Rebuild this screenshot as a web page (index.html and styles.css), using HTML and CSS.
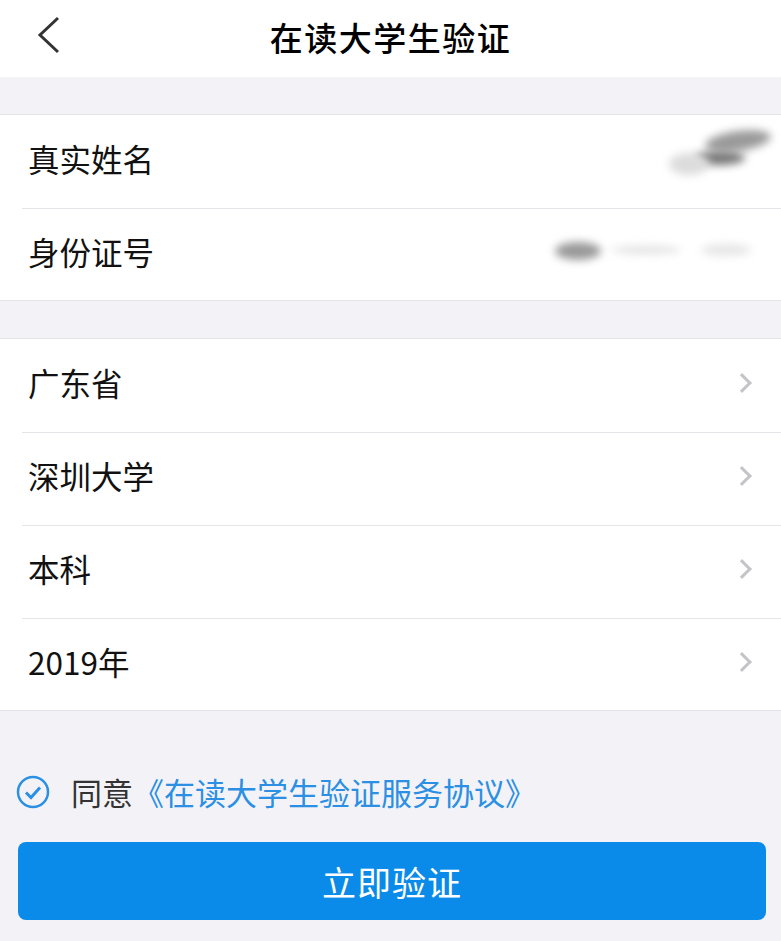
FILE: index.html
```html
<!DOCTYPE html>
<html lang="zh-CN">
<head>
  <meta charset="utf-8">
  <title>在读大学生验证</title>
  <link rel="stylesheet" href="styles.css">
</head>
<body>

  <header class="nav">
    <span class="back">
      <svg width="26" height="38" viewBox="0 0 26 38"><path d="M22 2 L4 19 L22 36" fill="none" stroke="#333" stroke-width="3"/></svg>
    </span>
    <h1 class="nav-title">在读大学生验证</h1>
  </header>

  <div class="group">
    <div class="row">
      <span class="label">真实姓名</span>
      <span class="value name-value">
        <i class="smudge s1"></i>
        <i class="smudge s2"></i>
        <i class="smudge s3"></i>
      </span>
    </div>
    <div class="row">
      <span class="label">身份证号</span>
      <span class="value id-value">
        <i class="smudge s4"></i>
        <i class="smudge s5"></i>
        <i class="smudge s6"></i>
      </span>
    </div>
  </div>

  <div class="group">
    <div class="row link-row">
      <span class="label">广东省</span>
      <span class="arrow"></span>
    </div>
    <div class="row link-row">
      <span class="label">深圳大学</span>
      <span class="arrow"></span>
    </div>
    <div class="row link-row">
      <span class="label">本科</span>
      <span class="arrow"></span>
    </div>
    <div class="row link-row">
      <span class="label">2019年</span>
      <span class="arrow"></span>
    </div>
  </div>

  <div class="agree">
    <svg class="check" width="34" height="34" viewBox="0 0 34 34">
      <circle cx="17" cy="17" r="15" fill="none" stroke="#2b8fe3" stroke-width="2.5"/>
      <path d="M10 17.5 L15 22.5 L24 12.5" fill="none" stroke="#2b8fe3" stroke-width="3"/>
    </svg>
    <span class="agree-text">同意</span>
    <a class="agree-link">《在读大学生验证服务协议》</a>
  </div>

  <button class="submit">立即验证</button>

</body>
</html>
```

FILE: styles.css
```css
body {
  margin: 0;
  background: #f3f3f7;
  font-family: "Noto Sans CJK SC", "Liberation Sans", sans-serif;
  color: #111;
}

.nav {
  height: 77px;
  background: #fff;
  display: flex;
  align-items: center;
  justify-content: center;
  position: relative;
}

.back {
  position: absolute;
  left: 36px;
  top: 16px;
}

.nav-title {
  margin: 0 0 4px 0;
  font-size: 33px;
  font-weight: 500;
  color: #000;
  letter-spacing: 1.5px;
}

.group {
  margin-top: 37px;
  background: #fff;
  border-top: 1px solid #e4e4e8;
  border-bottom: 1px solid #e4e4e8;
}

.row {
  height: 92px;
  display: flex;
  align-items: center;
  padding-left: 28px;
  padding-right: 28px;
  position: relative;
}

.row + .row::before {
  content: "";
  position: absolute;
  left: 22px;
  right: 0;
  top: 0;
  border-top: 1px solid #e4e4e8;
}

.row + .row {
  border-top: 1px solid transparent;
}

.label {
  font-size: 31.5px;
  line-height: 1;
  color: #111;
  margin-top: -5px;
}

.value {
  margin-left: auto;
  position: relative;
  height: 60px;
}

.name-value {
  width: 110px;
  margin-right: -22px;
}

.id-value {
  width: 220px;
  margin-right: -18px;
}

.smudge {
  position: absolute;
  display: block;
  border-radius: 50%;
  filter: blur(4px);
}

.s1 { left: 40px; top: 0; width: 66px; height: 20px; background: #9a9a9a; transform: rotate(-8deg); }
.s2 { left: 30px; top: 20px; width: 50px; height: 14px; background: #777; }
.s3 { left: 4px; top: 22px; width: 40px; height: 22px; background: #dcdcdc; }
.s4 { left: 4px; top: 18px; width: 46px; height: 18px; background: #999; }
.s5 { left: 60px; top: 22px; width: 70px; height: 8px; background: #e2e2e2; }
.s6 { left: 150px; top: 20px; width: 50px; height: 12px; background: #e6e6e6; }

.arrow {
  margin-left: auto;
  width: 11px;
  height: 11px;
  border-top: 3px solid #c4c4c8;
  border-right: 3px solid #c4c4c8;
  transform: rotate(45deg);
  margin-right: 4px;
  margin-top: -4px;
}

.agree {
  display: flex;
  align-items: center;
  margin-top: 58px;
  padding-left: 16px;
}

.check {
  margin-right: 21px;
}

.agree-text {
  font-size: 31px;
  color: #333;
  margin-right: 4px;
}

.agree-link {
  font-size: 31px;
  color: #2b8fe3;
  margin-left: -4px;
}

.submit {
  display: block;
  width: 748px;
  height: 78px;
  margin: 28px auto 0 18px;
  background: #0a8be9;
  border: none;
  border-radius: 8px;
  color: #fff;
  font-family: inherit;
  font-size: 34px;
  letter-spacing: 1px;
}
```
